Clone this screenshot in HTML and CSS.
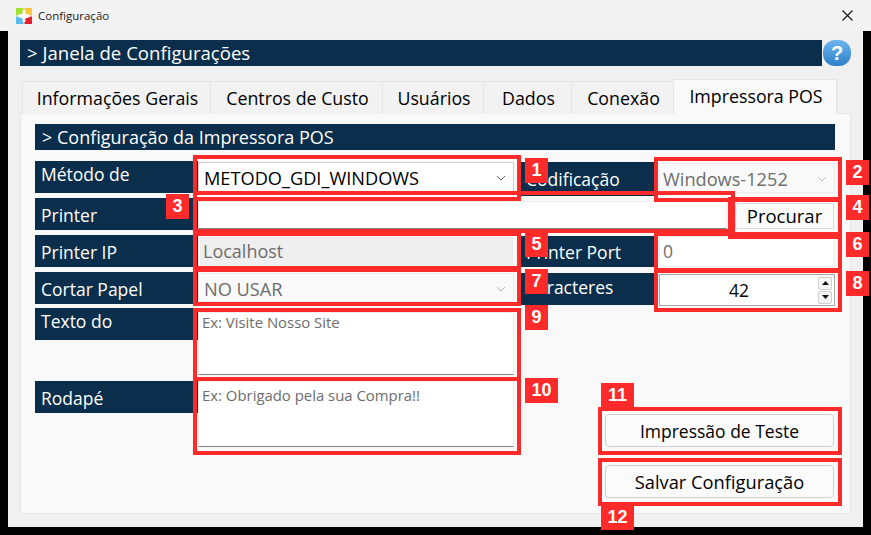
FILE: index.html
```html
<!DOCTYPE html>
<html lang="pt-BR">
<head>
<meta charset="utf-8">
<title>Configuração</title>
<link rel="stylesheet" href="styles.css">
</head>
<body>
<div class="screen">
  <header class="titlebar">
    <svg class="app-icon" viewBox="0 0 16 16" width="16" height="16" aria-hidden="true">
      <rect x="0" y="0" width="7.5" height="7.5" fill="#a2e233"/>
      <rect x="8.5" y="0" width="7.5" height="7.5" fill="#fdc43e"/>
      <rect x="0" y="8.5" width="7.5" height="7.5" fill="#58bdec"/>
      <rect x="8.5" y="8.5" width="7.5" height="7.5" fill="#e2202c"/>
      <path d="M6 5h4v1h2v4h-2v1H6v-1H4V6h2z" fill="#fff"/>
      <circle cx="8" cy="3.5" r="1.6" fill="#fff"/>
      <circle cx="8" cy="12.5" r="1.6" fill="#fff"/>
      <circle cx="3.2" cy="8" r="1.4" fill="#fff"/>
      <circle cx="12.8" cy="8" r="1.4" fill="#fff"/>
    </svg>
    <span class="title">Configuração</span>
    <svg class="close" viewBox="0 0 11 11" width="11" height="11" aria-hidden="true">
      <path d="M.5.5l10 10M10.500.5l-10 10" stroke="#111" stroke-width="1.1" fill="none"/>
    </svg>
  </header>

  <main class="window">
    <div class="top-row">
      <h1 class="bar main-bar">&gt; Janela de Configurações</h1>
      <span class="help">?</span>
    </div>

    <nav class="tabs">
      <span class="tab t1">Informações Gerais</span>
      <span class="tab t2">Centros de Custo</span>
      <span class="tab t3">Usuários</span>
      <span class="tab t4">Dados</span>
      <span class="tab t5">Conexão</span>
      <span class="tab t6 active">Impressora POS</span>
    </nav>

    <section class="panel">
      <h2 class="bar section-bar">&gt; Configuração da Impressora POS</h2>
      <div class="form">
        <div class="label up">Método de</div>
        <div class="select sel-main">
          <span>METODO_GDI_WINDOWS</span>
          <svg class="chev" viewBox="0 0 10 6" width="10" height="6"><path d="M1 1l4 4 4-4" stroke="#666" fill="none"/></svg>
        </div>
        <div class="label right-label l-cod">Codificação</div>
        <div class="select disabled sel-cod">
          <span>Windows-1252</span>
          <svg class="chev" viewBox="0 0 10 6" width="10" height="6"><path d="M1 1l4 4 4-4" stroke="#bbb" fill="none"/></svg>
        </div>

        <div class="label">Printer</div>
        <div class="printer-row">
          <div class="input-line"></div>
          <button class="btn-small">Procurar</button>
        </div>

        <div class="label">Printer IP</div>
        <div class="ip">Localhost</div>
        <div class="label right-label l-port">Printer Port</div>
        <div class="port">0</div>

        <div class="label">Cortar Papel</div>
        <div class="select disabled sel-cut">
          <span>NO USAR</span>
          <svg class="chev" viewBox="0 0 10 6" width="10" height="6"><path d="M1 1l4 4 4-4" stroke="#bbb" fill="none"/></svg>
        </div>
        <div class="label right-label l-car">Caracteres</div>
        <div class="spin">
          <span class="spin-value">42</span>
          <span class="spin-btns">
            <span class="spin-btn"><svg viewBox="0 0 7 4" width="7" height="4"><path d="M3.500 0L7 4H0z" fill="#111"/></svg></span>
            <span class="spin-btn"><svg viewBox="0 0 7 4" width="7" height="4"><path d="M0 0h7L3.500 4z" fill="#111"/></svg></span>
          </span>
        </div>

        <div class="label up">Texto do</div>
        <div class="area a1">Ex: Visite Nosso Site</div>

        <div class="label row6">Rodapé</div>
        <div class="area a2">Ex: Obrigado pela sua Compra!!</div>
        <div class="actions">
          <button class="btn">Impressão de Teste</button>
          <button class="btn btn-save">Salvar Configuração</button>
        </div>
      </div>
    </section>
  </main>

  <i class="mark r1"></i><i class="mark r2"></i><i class="mark r3"></i><i class="mark r4"></i>
  <i class="mark r5"></i><i class="mark r6"></i><i class="mark r7"></i><i class="mark r8"></i>
  <i class="mark r9"></i><i class="mark r10"></i><i class="mark r11"></i><i class="mark r12"></i>

  <b class="badge b1">1</b><b class="badge b2">2</b><b class="badge b3">3</b><b class="badge b4">4</b>
  <b class="badge b5">5</b><b class="badge b6">6</b><b class="badge b7">7</b><b class="badge b8">8</b>
  <b class="badge b9">9</b><b class="badge wide b10">10</b><b class="badge wide b11">11</b><b class="badge wide b12">12</b>
</div>
</body>
</html>
```
FILE: styles.css
```css
* { box-sizing: border-box; }
html, body { margin: 0; padding: 0; background: #000; }
body { font-family: "Open Sans", "Noto Sans", sans-serif; color: #000; }
.screen { position: relative; width: 871px; height: 535px; overflow: hidden; background: #000; display: flex; flex-direction: column; }

.titlebar { height: 31px; flex: none; background: #f3f3f3; display: flex; align-items: center; padding: 0 18px 0 16px; }
.app-icon { flex: none; }
.title { margin-left: 6px; font-size: 11.500px; color: #222; }
.close { margin-left: auto; margin-top: -1px; }

.window { flex: 1; margin: 0 8px 8px; background: #f0f0f0; padding: 9px 12px 13px; display: flex; flex-direction: column; min-height: 0; }
.top-row { display: flex; gap: 1px; height: 26px; flex: none; }
.bar { margin: 0; background: #0a2e4b; color: #fff; font-weight: 400; height: 26px; line-height: 26px; white-space: nowrap; }
.main-bar { width: 802px; font-size: 18.600px; padding-left: 7px; }
.help { width: 28px; height: 26px; border-radius: 12px; background: linear-gradient(#6db6ee, #2d7fc9); color: #fff; font: 700 20px/26px "Liberation Sans", sans-serif; text-align: center; }

.tabs { display: flex; height: 34px; margin: 14px 0 -1px 2px; align-items: flex-end; flex: none; position: relative; z-index: 1; }
.tab { height: 33px; line-height: 33px; text-align: center; font-size: 17.800px; background: #f2f2f2; border: 1px solid #e4e4e4; border-bottom: 0; border-left: 0; white-space: nowrap; padding-left: 2px; }
.t1 { width: 189px; border-left: 1px solid #e4e4e4; }
.t2 { width: 172px; }
.t3 { width: 101px; }
.t4 { width: 88px; }
.t5 { width: 102px; }
.t6 { width: 163px; }
.tab.active { height: 35px; line-height: 32px; background: #f9f9f9; border-left: 0; }

.panel { flex: 1; background: #f9f9f9; border: 1px solid #e5e5e5; padding: 10px 13px 0 14px; display: flex; flex-direction: column; min-height: 0; }
.section-bar { width: 800px; height: 26px; line-height: 26px; flex: none; font-size: 18px; padding-left: 7px; }

.form { margin-top: 11px; display: grid; flex: 1; grid-template-columns: 163px 323px 138px 176px; grid-template-rows: 37px 37px 37px 36px 73px 1fr; }

.label { background: #0a2e4b; color: #fff; height: 32px; line-height: 34px; font-size: 17.500px; padding-left: 6px; white-space: nowrap; overflow: hidden; }
.label.up { line-height: 27px; }
.row6 { grid-column: 1; line-height: 34px; }
.right-label { padding-left: 5px; margin-right: 5px; }
.l-cod { margin-top: 1px; height: 34px; line-height: 34px; }
.l-port { margin-top: 1px; height: 31px; line-height: 33px; }
.l-car { margin-top: 1px; line-height: 29px; }

.select { display: flex; align-items: center; justify-content: space-between; border: 1px solid #d0d0d0; padding: 1px 7px 0 5px; font-size: 18.200px; white-space: nowrap; }
.select .chev { flex: none; }
.sel-main { background: #fff; height: 30px; margin: 1px 7px 0 0; }
.sel-cod { height: 30px; margin-top: 2px; padding: 2px 7px 0 3px; }
.sel-cut { height: 29px; margin: 1px 7px 0 0; padding-top: 3px; }
.disabled { background: #fafafa; color: #6d6d6d; border-color: #ececec; }

.printer-row { grid-column: 2 / 5; display: flex; gap: 8px; padding-right: 1px; align-items: flex-start; }
.input-line { flex: 1; height: 28px; margin-top: 3px; background: #fff; border: 1px solid #eee; border-bottom: 1px solid #808080; }
.btn-small { width: 99px; height: 26px; margin-top: 5px; background: #fbfbfb; border: 1px solid #dcdcdc; font: 400 18.500px/22px "Open Sans", sans-serif; padding: 0; color: #000; }

.ip { height: 28px; margin: 2px 8px 0 2px; background: #efefef; border: 1px solid #ececec; color: #6d6d6d; font-size: 18px; line-height: 26px; padding-left: 2px; }
.port { height: 31px; margin-top: 1px; background: #fff; border: 1px solid #ececec; color: #6d6d6d; font-size: 17.500px; line-height: 29px; padding-left: 3px; }

.spin { height: 32px; margin-top: 2px; background: #fff; border: 1px solid #a8a8a8; display: flex; align-items: center; position: relative; padding-right: 1px; }
.spin-value { flex: 1; text-align: center; font-size: 17.500px; }
.spin-btns { display: flex; flex-direction: column; gap: 1px; width: 14px; margin-right: 1px; }
.spin-btn { height: 13px; background: #f6f6f6; border: 1px solid #d0d0d0; border-radius: 2px; display: flex; align-items: center; justify-content: center; }

.area { background: #fff; border: 1px solid #eee; border-bottom: 1px solid #808080; color: #6d6d6d; font-size: 14.900px; padding: 0 3px; margin-right: 7px; white-space: nowrap; overflow: hidden; }
.a1 { height: 63px; margin-top: 4px; line-height: 18px; }
.a2 { height: 66px; line-height: 26px; align-self: start; }

.actions { grid-column: 3 / 5; display: flex; flex-direction: column; align-items: flex-end; gap: 18px; padding: 33px 1px 0 0; }
.btn { width: 229px; height: 33px; background: #fbfbfb; border: 1px solid #cfcfcf; border-radius: 4px; font: 400 17.500px/24px "Open Sans", sans-serif; color: #000; padding: 1px 0 0; }
.btn-save { font-size: 18.300px; }

.mark { position: absolute; border: 4px solid #ff2a2a; }
.r1 { left: 193px; top: 155px; width: 328px; height: 46px; }
.r2 { left: 654px; top: 157px; width: 188px; height: 45px; }
.r3 { left: 193px; top: 191px; width: 542px; height: 42px; }
.r4 { left: 728px; top: 197px; width: 114px; height: 42px; }
.r5 { left: 193px; top: 232px; width: 328px; height: 38px; }
.r6 { left: 654px; top: 232px; width: 188px; height: 40px; }
.r7 { left: 193px; top: 268px; width: 328px; height: 38px; }
.r8 { left: 654px; top: 269px; width: 188px; height: 43px; }
.r9 { left: 193px; top: 308px; width: 328px; height: 73px; }
.r10 { left: 193px; top: 377px; width: 328px; height: 78px; }
.r11 { left: 598px; top: 407px; width: 244px; height: 48px; }
.r12 { left: 598px; top: 458px; width: 244px; height: 48px; }

.badge { position: absolute; width: 23px; height: 25px; background: #ff2a2a; color: #fff; font: 700 18px/25px "Liberation Sans", sans-serif; text-align: center; }
.badge.wide { width: 33px; height: 25px; }
.b1 { left: 525px; top: 158px; }
.b2 { left: 846px; top: 160px; }
.b3 { left: 166px; top: 194px; }
.b4 { left: 846px; top: 195px; }
.b5 { left: 525px; top: 232px; }
.b6 { left: 846px; top: 232px; }
.b7 { left: 525px; top: 269px; }
.b8 { left: 846px; top: 271px; }
.b9 { left: 525px; top: 305px; }
.b10 { left: 525px; top: 378px; }
.b11 { left: 601px; top: 383px; }
.b12 { left: 601px; top: 505px; }
```
